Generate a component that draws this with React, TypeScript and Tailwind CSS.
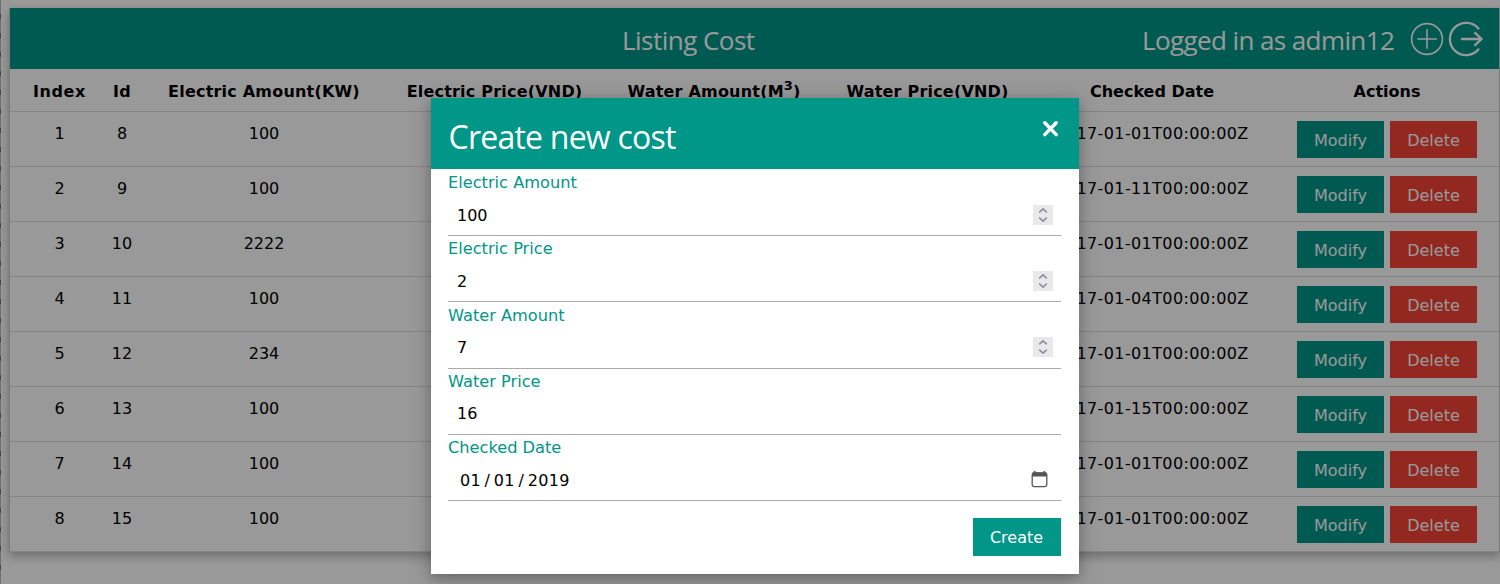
import React from "react";

type Cost = { index: number; id: number; amount: number; date: string };

const costs: Cost[] = [
  { index: 1, id: 8, amount: 100, date: "2017-01-01T00:00:00Z" },
  { index: 2, id: 9, amount: 100, date: "2017-01-11T00:00:00Z" },
  { index: 3, id: 10, amount: 2222, date: "2017-01-01T00:00:00Z" },
  { index: 4, id: 11, amount: 100, date: "2017-01-04T00:00:00Z" },
  { index: 5, id: 12, amount: 234, date: "2017-01-01T00:00:00Z" },
  { index: 6, id: 13, amount: 100, date: "2017-01-15T00:00:00Z" },
  { index: 7, id: 14, amount: 100, date: "2017-01-01T00:00:00Z" },
  { index: 8, id: 15, amount: 100, date: "2017-01-01T00:00:00Z" },
];

const columns = "grid grid-cols-[87px_38px_246px_215px_224px_203px_246px_224px] pl-1.5 text-center";

function PlusCircle() {
  return (
    <svg className="h-[34px] w-[34px]" viewBox="0 0 34 34" fill="none" stroke="white" strokeWidth="1.6">
      <circle cx="17" cy="17" r="15.4" />
      <path d="M17 7.2v19.6M7.2 17h19.6" />
    </svg>
  );
}

function Logout() {
  return (
    <svg className="h-[36px] w-[36px]" viewBox="0 0 36 36" fill="none" stroke="white" strokeWidth="2.3">
      <path d="M31 8.2A16.2 16.2 0 1 0 31 27.8" />
      <path d="M13 18h20.5M26.5 11.4l7 6.6-7 6.6" />
    </svg>
  );
}

function Spinner() {
  return (
    <span className="flex h-5 w-5 items-center justify-center bg-[#e9e9ed]">
      <svg className="h-4 w-3" viewBox="0 0 12 16" fill="none" stroke="#8f8f9d" strokeWidth="1.7">
        <path d="M2.2 5.4 6 1.9l3.8 3.5M2.2 10.6 6 14.1l3.8-3.5" />
      </svg>
    </span>
  );
}

function Calendar() {
  return (
    <svg className="mr-[5px] mb-[2px] h-[18px] w-[17px]" viewBox="0 0 17 18">
      <path d="M3.7 1v3M13.3 1v3" stroke="#555" strokeWidth="1.7" />
      <rect x="1.2" y="3" width="14.6" height="13.6" rx="1.8" fill="white" stroke="#555" strokeWidth="1.3" />
      <path d="M1 4a1.5 1.5 0 0 1 1.5-1.5h12A1.5 1.5 0 0 1 16 4v2.6H1z" fill="#555" />
    </svg>
  );
}

function Field({ label, children, icon }: { label: string; children: React.ReactNode; icon?: React.ReactNode }) {
  return (
    <div className="h-[66.3px]">
      <div className="h-[25px] text-[16.2px] leading-[27px] text-[#009688]">{label}</div>
      <div className="flex h-[42px] items-center justify-between border-b border-[#aaa] pr-2 pl-[9px]">
        <span className="pt-px">{children}</span>
        {icon}
      </div>
    </div>
  );
}

export default function App() {
  return (
    <div className="relative h-[584px] w-[1500px] overflow-hidden bg-white font-['DejaVu_Sans',sans-serif] text-[16px] leading-[25px] text-black">
      <div className="flex h-full items-start">
        <div className="h-full w-px shrink-0 bg-[repeating-linear-gradient(#bbb_0_14px,#777_14px_19px)]" />
        <main className="mt-2 ml-2 w-[1491px] shrink-0 border-r border-l border-[#ccc] bg-white shadow-[0_4px_10px_rgba(0,0,0,0.3)]">
          <header className="flex h-[61px] items-center bg-[#009688] font-['Open_Sans',sans-serif] text-[26px] leading-[39px] text-white">
            <h1 className="ml-[612px] w-[133px] shrink-0 pt-[3px] tracking-[-0.52px] whitespace-nowrap">Listing Cost</h1>
            <span className="ml-[387px] w-[252px] shrink-0 pt-[3px] tracking-[-0.6px] whitespace-nowrap">Logged in as admin12</span>
            <span className="ml-[16px] flex items-center gap-[3.5px]">
              <PlusCircle />
              <Logout />
            </span>
          </header>
          <div className={`${columns} h-[43px] items-center border-b border-[#ddd] pt-0.5 tracking-[0.2px] font-bold whitespace-nowrap`}>
            <span className="tracking-[0.6px]">Index</span>
            <span>Id</span>
            <span>Electric Amount(KW)</span>
            <span>Electric Price(VND)</span>
            <span>
              Water Amount(M<sup className="text-[13px]">3</sup>)
            </span>
            <span>Water Price(VND)</span>
            <span className="tracking-normal">Checked Date</span>
            <span className="tracking-normal">Actions</span>
          </div>
          {costs.map((c) => (
            <div key={c.index} className={`${columns} h-[55px] border-b border-[#ddd] pt-[9px]`}>
              <span>{c.index}</span>
              <span>{c.id}</span>
              <span>{c.amount}</span>
              <span className="col-start-7 tracking-[0.39px]">{c.date}</span>
              <span className="flex justify-center gap-1.5 text-white">
                <button className="h-[37px] w-[87px] bg-[#009688] pt-px">Modify</button>
                <button className="h-[37px] w-[87px] bg-[#f44336] pt-px">Delete</button>
              </span>
            </div>
          ))}
        </main>
      </div>

      <div className="absolute inset-0 flex items-start bg-black/40 pt-[98px] pl-[431px]">
        <section className="h-[475.5px] w-[647.5px] bg-white shadow-[0_4px_11px_rgba(0,0,0,0.2),0_4px_22px_rgba(0,0,0,0.19)]">
          <header className="flex h-[71px] justify-between bg-[#009688] pr-5 pl-[17.5px] text-white">
            <h2 className="pt-[6px] font-['Open_Sans',sans-serif] text-[32px] leading-[65px] tracking-[-0.77px] whitespace-nowrap">Create new cost</h2>
            <svg className="mt-[22px] h-[17px] w-[17px]" viewBox="0 0 17 17" stroke="white" strokeWidth="3.5" strokeLinecap="round">
              <path d="M2.8 2.8l11.4 11.8M14.2 2.8L2.8 14.6" />
            </svg>
          </header>
          <div className="pr-[18px] pl-[17px]">
            <Field label="Electric Amount" icon={<Spinner />}>100</Field>
            <Field label="Electric Price" icon={<Spinner />}>2</Field>
            <Field label="Water Amount" icon={<Spinner />}>7</Field>
            <Field label="Water Price">16</Field>
            <Field label="Checked Date" icon={<Calendar />}>
              <span className="flex gap-[3.5px] pl-[3px] tracking-[0.35px]">
                <span>01</span>
                <span>/</span>
                <span>01</span>
                <span>/</span>
                <span>2019</span>
              </span>
            </Field>
            <div className="flex justify-end pt-[17.5px]">
              <button className="h-[38px] w-[88px] bg-[#009688] pt-px text-white">Create</button>
            </div>
          </div>
        </section>
      </div>
    </div>
  );
}
